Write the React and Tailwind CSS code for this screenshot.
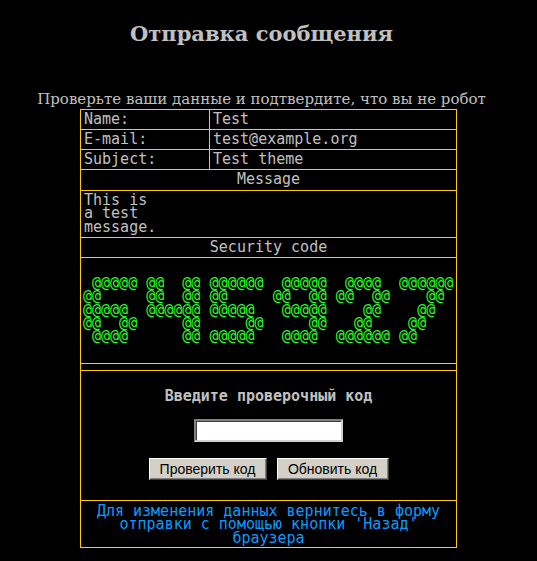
import React, { useState } from 'react';

const captcha = [
  ' @@@@@ @@  @@ @@@@@@  @@@@@  @@@@  @@@@@@',
  '@@     @@  @@ @@     @@  @@ @@  @@    @@',
  '@@@@@  @@@@@@ @@@@@   @@@@@    @@    @@',
  '@@  @@     @@     @@     @@   @@    @@',
  ' @@@@      @@ @@@@@   @@@@  @@@@@@ @@',
];

const fields = [
  { label: 'Name:', value: 'Test' },
  { label: 'E-mail:', value: 'test@example.org' },
  { label: 'Subject:', value: 'Test theme' },
];

const App = () => {
  const [code, setCode] = useState('');

  return (
    <div className="min-h-[561px] bg-black text-[#c0c0c0]">
      {/* Header */}
      <h1 className="pr-[14px] pt-[20px] text-center font-['DejaVu_Serif',serif] text-[21px] font-bold leading-[28px]">
        Отправка сообщения
      </h1>
      <p className="mt-[42px] pr-[14px] text-center font-['DejaVu_Serif',serif] text-[15px] leading-[19px]">
        Проверьте ваши данные и подтвердите, что вы не робот
      </p>

      {/* Summary table */}
      <div className="mx-auto w-[377px] border border-[#ffcc00] font-['DejaVu_Sans_Mono',monospace] text-[15px] leading-[13.33px]">
        {fields.map((f) => (
          <div key={f.label} className="grid h-[20px] grid-cols-[128px_1fr] border-b border-[#ffcc00]">
            <div className="px-[3px] pt-[3px]">{f.label}</div>
            <div className="border-l border-[#ffcc00] px-[3px] pt-[3px]">{f.value}</div>
          </div>
        ))}

        <div className="h-[21px] border-b border-[#ffcc00] pt-[3px] text-center">Message</div>
        <div className="h-[47px] whitespace-pre border-b border-[#ffcc00] px-[3px] pt-[3px]">
          {'This is\na test\nmessage.'}
        </div>

        <div className="h-[20px] border-b border-[#ffcc00] pt-[3px] text-center">Security code</div>
        <div className="h-[106px] whitespace-pre border-b border-[#ffcc00] px-[2px] pt-[19px] text-[#22ff22]">
          {captcha.join('\n')}
        </div>
        <div className="h-[7px] border-b border-[#ffcc00]" />

        {/* Code form */}
        <div className="flex h-[130px] flex-col items-center border-b border-[#ffcc00] pt-[16px]">
          <div className="font-bold leading-[19px]">Введите проверочный код</div>
          <input
            type="text"
            value={code}
            onChange={(e) => setCode(e.target.value)}
            className="mt-[13px] h-[23px] w-[149px] border-2 border-t-[#808080] border-l-[#808080] border-b-[#d4d0c8] border-r-[#d4d0c8] bg-white px-1 text-[13px] text-black shadow-[inset_1px_1px_0_#404040] outline-none"
          />
          <div className="mt-[16px] flex gap-[10px] font-['Liberation_Sans',Arial,sans-serif] text-[14px] leading-none text-black">
            <button className="h-[22px] w-[118px] border border-t-white border-l-white border-b-[#404040] border-r-[#404040] bg-[#d4d0c8] shadow-[inset_-1px_-1px_0_#808080]">
              Проверить код
            </button>
            <button className="h-[22px] w-[112px] border border-t-white border-l-white border-b-[#404040] border-r-[#404040] bg-[#d4d0c8] shadow-[inset_-1px_-1px_0_#808080]">
              Обновить код
            </button>
          </div>
        </div>

        {/* Footer note */}
        <div className="h-[46px] px-[3px] pt-[4px] text-center text-[#0a9bff]">
          Для изменения данных вернитесь в форму отправки с помощью кнопки 'Назад' браузера
        </div>
      </div>
    </div>
  );
};

export default App;
